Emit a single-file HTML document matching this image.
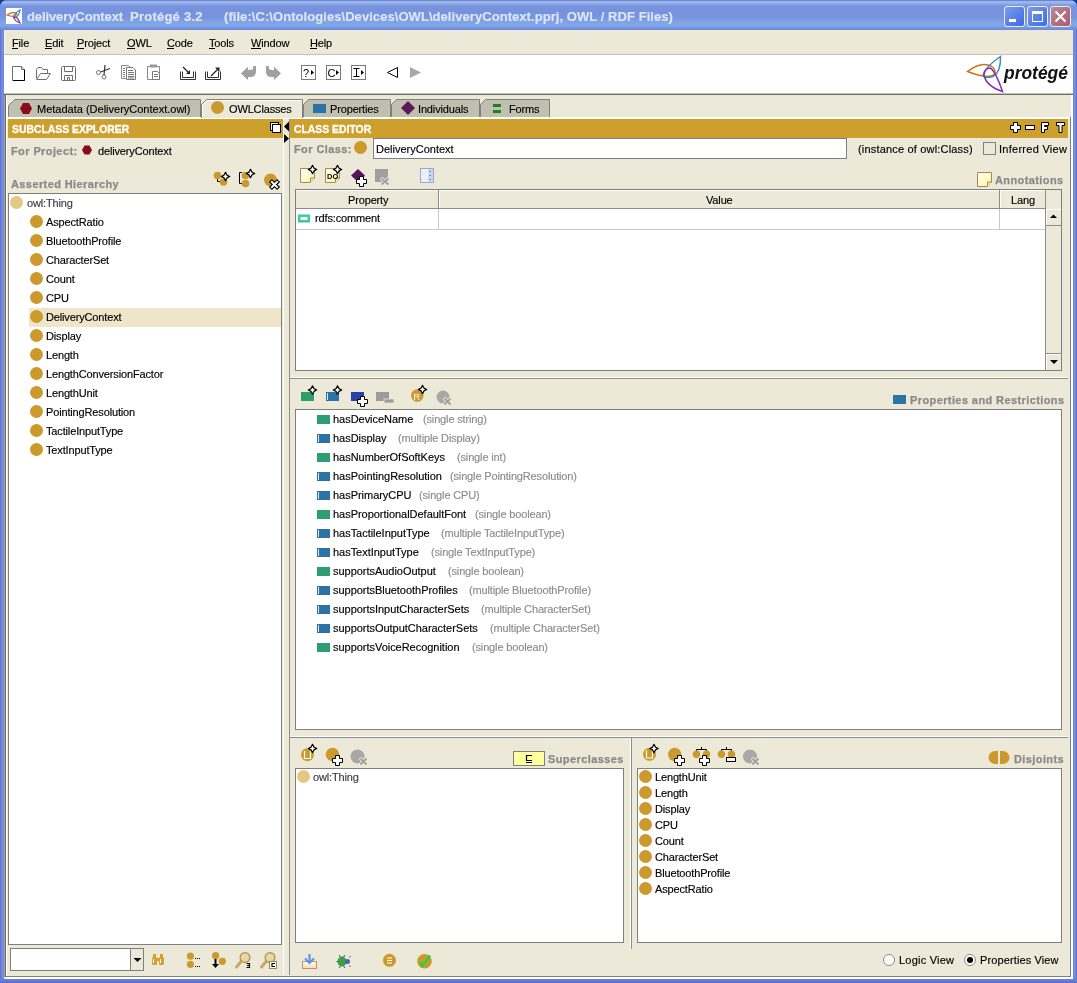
<!DOCTYPE html>
<html><head><meta charset="utf-8">
<style>
*{margin:0;padding:0;box-sizing:border-box}
html,body{width:1077px;height:983px;overflow:hidden;background:#0A3C9C}
body{position:relative;will-change:transform;font-family:"Liberation Sans",sans-serif;font-size:11px;color:#000}
.a{position:absolute}
.t{position:absolute;white-space:nowrap;font-size:11px;line-height:13px;letter-spacing:-0.15px;-webkit-text-stroke:0.15px currentColor}
.b{font-weight:bold}
.gl{position:absolute;white-space:nowrap;line-height:13px;color:#8A8A8A;font-weight:bold;font-size:11px;letter-spacing:0.4px;-webkit-text-stroke:0.25px #8A8A8A}
.box{position:absolute;background:#fff;border:1px solid #7F7F7F}
.gold{position:absolute;background:#CD9F2D}
.ci{position:absolute;width:13px;height:13px;border-radius:50%;background:#CC9A2C}
.pg{position:absolute;width:13px;height:9px;background:#2E9E72}
.pb{position:absolute;width:13px;height:9px;background:#2B72A6}
.pb:after{content:"";position:absolute;left:1px;top:1px;width:1px;height:7px;background:#DDE8F0}
</style></head><body>
<div class="a" style="left:0px;top:0px;width:1077px;height:983px;background:#6E86DC;border-radius:7px 7px 0 0"></div>
<div class="a" style="left:0px;top:0px;width:1077px;height:30px;background:linear-gradient(#6387DD 0px,#6387DD 1px,#9DB4E8 1px,#9DB4E8 3px,#7D9BE0 5px,#7893DD 7px,#7893DD 17px,#7FA5E6 22px,#7FA5E6 26px,#7089DD 29px,#7089DD 30px);border-radius:7px 7px 0 0"></div>
<div class="a" style="left:0px;top:30px;width:4px;height:953px;background:linear-gradient(90deg,#5A6CD0,#7A8EE0 50%,#6A86E0);"></div>
<div class="a" style="left:1073px;top:30px;width:4px;height:953px;background:linear-gradient(90deg,#6A86E0,#7A8EE0 50%,#5A6CD0);"></div>
<div class="a" style="left:0px;top:979px;width:1077px;height:4px;background:linear-gradient(#6A86E0,#5A6CD0);"></div>
<div class="a" style="left:6px;top:8px;width:16px;height:16px;background:#fff;"></div>
<div class="t b" style="left:27px;top:9px;font-size:13px;line-height:15px;color:#DCE6F8;letter-spacing:0;letter-spacing:-0.1px">deliveryContext</div>
<div class="t b" style="left:130px;top:9px;font-size:13px;line-height:15px;color:#DCE6F8;letter-spacing:0;letter-spacing:0.24px">Protégé 3.2</div>
<div class="t b" style="left:224px;top:9px;font-size:13px;line-height:15px;color:#DCE6F8;letter-spacing:0;letter-spacing:0.06px">(file:\C:\Ontologies\Devices\OWL\deliveryContext.pprj, OWL / RDF Files)</div>
<div class="a" style="left:1004px;top:6px;width:21px;height:21px;background:linear-gradient(135deg,#7B9BEA,#3E6AE6);border:1px solid #E8EEF8;border-radius:3px"></div>
<div class="a" style="left:1027px;top:6px;width:21px;height:21px;background:linear-gradient(135deg,#7B9BEA,#3E6AE6);border:1px solid #E8EEF8;border-radius:3px"></div>
<div class="a" style="left:1050px;top:6px;width:21px;height:21px;background:linear-gradient(135deg,#B7899B,#B05A68);border:1px solid #E8EEF8;border-radius:3px"></div>
<div class="a" style="left:4px;top:30px;width:1069px;height:25px;background:#ECE9D8;"></div>
<div class="t" style="left:12px;top:37px;">File</div>
<div class="t" style="left:45px;top:37px;">Edit</div>
<div class="t" style="left:77px;top:37px;">Project</div>
<div class="t" style="left:127px;top:37px;">OWL</div>
<div class="t" style="left:167px;top:37px;">Code</div>
<div class="t" style="left:209px;top:37px;">Tools</div>
<div class="t" style="left:251px;top:37px;">Window</div>
<div class="t" style="left:310px;top:37px;">Help</div>
<div class="a" style="left:12px;top:48px;width:6px;height:1px;background:#000;"></div>
<div class="a" style="left:45px;top:48px;width:7px;height:1px;background:#000;"></div>
<div class="a" style="left:77px;top:48px;width:7px;height:1px;background:#000;"></div>
<div class="a" style="left:127px;top:48px;width:8px;height:1px;background:#000;"></div>
<div class="a" style="left:167px;top:48px;width:7px;height:1px;background:#000;"></div>
<div class="a" style="left:209px;top:48px;width:6px;height:1px;background:#000;"></div>
<div class="a" style="left:251px;top:48px;width:10px;height:1px;background:#000;"></div>
<div class="a" style="left:310px;top:48px;width:7px;height:1px;background:#000;"></div>
<div class="a" style="left:4px;top:55px;width:1069px;height:38px;background:#fff;"></div>
<div class="a" style="left:4px;top:54px;width:1069px;height:1px;background:#C5C3B0;"></div>
<div class="a" style="left:4px;top:30px;width:1px;height:24px;background:#F8F4E2;"></div>
<div class="a" style="left:4px;top:93px;width:1069px;height:1px;background:#C5C2B2;"></div>
<div class="a" style="left:4px;top:94px;width:1069px;height:1px;background:#716F64;"></div>
<div class="a" style="left:4px;top:95px;width:1069px;height:884px;background:#ECE9D8;"></div>
<div class="a" style="left:4px;top:95px;width:1px;height:882px;background:#A5A294;"></div>
<div class="a" style="left:5px;top:95px;width:1px;height:882px;background:#716F64;"></div>
<div class="a" style="left:6px;top:95px;width:1px;height:882px;background:#FFFFFF;"></div>
<div class="a" style="left:6px;top:977px;width:1067px;height:2px;background:#fff;"></div>
<div class="a" style="left:1071px;top:95px;width:2px;height:884px;background:#fff;"></div>
<div class="a" style="left:6px;top:976px;width:1065px;height:1px;background:#7F7F7F;"></div>
<div class="a" style="left:1070px;top:117px;width:1px;height:860px;background:#7F7F7F;"></div>
<div class="a" style="left:6px;top:117px;width:1064px;height:2px;background:#fff;"></div>
<svg class="a" style="left:0;top:95px" width="560" height="24">
 <path d="M8.5,22 V10.5 L14.5,4.5 H200.5 V22" fill="#C0C0B1" stroke="#7F7F7F"/>
 <path d="M7.5,22 V10 L14,3.5" fill="none" stroke="#fff"/>
 <path d="M201.5,23 V9.5 L206.5,4.5 H302.5 V23" fill="#ECE9D8" stroke="#7F7F7F"/>
 <path d="M202.5,23 V10 L207,5.5 H301.5" fill="none" stroke="#fff"/>
 <path d="M303.5,22 V9.5 L308.5,4.5 H390.5 V22" fill="#C0C0B1" stroke="#7F7F7F"/>
 <path d="M391.5,22 V9.5 L396.5,4.5 H479.5 V22" fill="#C0C0B1" stroke="#7F7F7F"/>
 <path d="M480.5,22 V9.5 L485.5,4.5 H549.5 V22" fill="#C0C0B1" stroke="#7F7F7F"/>
</svg>
<svg class="a" style="left:20px;top:103px" width="14" height="13"><path d="M3,0 H9 L12,5.5 L9,11 H3 L0,5.5Z" fill="#8B0A1E"/></svg>
<div class="t" style="left:37px;top:103px;letter-spacing:0px">Metadata (DeliveryContext.owl)</div>
<div class="ci" style="left:211px;top:101px"></div>
<div class="t" style="left:229px;top:103px;">OWLClasses</div>
<div class="a" style="left:313px;top:104px;width:13px;height:9px;background:#2C72A8;"></div>
<div class="t" style="left:330px;top:103px;">Properties</div>
<svg class="a" style="left:401px;top:101px" width="14" height="14"><path d="M7,0 L14,7 L7,14 L0,7Z" fill="#5A1A5A"/></svg>
<div class="t" style="left:418px;top:103px;">Individuals</div>
<div class="a" style="left:493px;top:104px;width:8px;height:3px;background:#208020;"></div>
<div class="a" style="left:493px;top:110px;width:8px;height:3px;background:#208020;"></div>
<div class="t" style="left:509px;top:103px;">Forms</div>
<div class="gold" style="left:8px;top:119px;width:275px;height:19px"></div>
<div class="t b" style="left:12px;top:123px;color:#fff;font-size:10.4px;letter-spacing:0px;-webkit-text-stroke:0.3px #fff">SUBCLASS EXPLORER</div>
<div class="gold" style="left:290px;top:119px;width:778px;height:19px"></div>
<div class="t b" style="left:294px;top:123px;color:#fff;font-size:10.4px;letter-spacing:0px;-webkit-text-stroke:0.3px #fff">CLASS EDITOR</div>
<div class="a" style="left:283px;top:119px;width:1px;height:856px;background:#fff;"></div>
<div class="a" style="left:289px;top:119px;width:1px;height:856px;background:#8F8F8F;"></div>
<div class="gl" style="left:11px;top:145px;">For Project:</div>
<div class="t" style="left:98px;top:145px;">deliveryContext</div>
<div class="gl" style="left:11px;top:178px;">Asserted Hierarchy</div>
<div class="box" style="left:8px;top:193px;width:274px;height:752px"></div>
<div class="a" style="left:10px;top:196px;width:13px;height:13px;border-radius:50%;background:#E4C882"></div>
<div class="t" style="left:27px;top:197px;color:#3C3C3C">owl:Thing</div>
<div class="ci" style="left:30px;top:215px"></div>
<div class="t" style="left:46px;top:216px;">AspectRatio</div>
<div class="ci" style="left:30px;top:234px"></div>
<div class="t" style="left:46px;top:235px;">BluetoothProfile</div>
<div class="ci" style="left:30px;top:253px"></div>
<div class="t" style="left:46px;top:254px;">CharacterSet</div>
<div class="ci" style="left:30px;top:272px"></div>
<div class="t" style="left:46px;top:273px;">Count</div>
<div class="ci" style="left:30px;top:291px"></div>
<div class="t" style="left:46px;top:292px;">CPU</div>
<div class="a" style="left:29px;top:308px;width:252px;height:19px;background:#EFE5C8;"></div>
<div class="ci" style="left:30px;top:310px"></div>
<div class="t" style="left:46px;top:311px;">DeliveryContext</div>
<div class="ci" style="left:30px;top:329px"></div>
<div class="t" style="left:46px;top:330px;">Display</div>
<div class="ci" style="left:30px;top:348px"></div>
<div class="t" style="left:46px;top:349px;">Length</div>
<div class="ci" style="left:30px;top:367px"></div>
<div class="t" style="left:46px;top:368px;">LengthConversionFactor</div>
<div class="ci" style="left:30px;top:386px"></div>
<div class="t" style="left:46px;top:387px;">LengthUnit</div>
<div class="ci" style="left:30px;top:405px"></div>
<div class="t" style="left:46px;top:406px;">PointingResolution</div>
<div class="ci" style="left:30px;top:424px"></div>
<div class="t" style="left:46px;top:425px;">TactileInputType</div>
<div class="ci" style="left:30px;top:443px"></div>
<div class="t" style="left:46px;top:444px;">TextInputType</div>
<div class="box" style="left:10px;top:948px;width:134px;height:23px"></div>
<div class="a" style="left:130px;top:949px;width:13px;height:21px;background:#ECE9D8;border-left:1px solid #7F7F7F"></div>
<div class="gl" style="left:294px;top:143px;">For Class:</div>
<div class="ci" style="left:354px;top:141px"></div>
<div class="box" style="left:373px;top:138px;width:474px;height:21px"></div>
<div class="t" style="left:376px;top:143px;letter-spacing:0px">DeliveryContext</div>
<div class="t" style="left:858px;top:143px;letter-spacing:0.18px">(instance of owl:Class)</div>
<div class="a" style="left:983px;top:142px;width:13px;height:13px;background:#ECE9D8;border:1px solid #808080"></div>
<div class="t" style="left:999px;top:143px;letter-spacing:0.27px">Inferred View</div>
<div class="gl" style="left:995px;top:174px;">Annotations</div>
<div class="box" style="left:295px;top:189px;width:767px;height:182px"></div>
<div class="gl" style="left:910px;top:394px;">Properties and Restrictions</div>
<div class="box" style="left:295px;top:409px;width:767px;height:321px"></div>
<div class="pg" style="left:317px;top:415px"></div><div class="t" style="left:333px;top:413px;letter-spacing:-0.03px">hasDeviceName</div>
<div class="t" style="left:423px;top:413px;color:#8C8C8C">(single string)</div>
<div class="pb" style="left:317px;top:434px"></div><div class="t" style="left:333px;top:432px;letter-spacing:-0.03px">hasDisplay</div>
<div class="t" style="left:398px;top:432px;color:#8C8C8C">(multiple Display)</div>
<div class="pg" style="left:317px;top:453px"></div><div class="t" style="left:333px;top:451px;letter-spacing:-0.03px">hasNumberOfSoftKeys</div>
<div class="t" style="left:457px;top:451px;color:#8C8C8C">(single int)</div>
<div class="pb" style="left:317px;top:472px"></div><div class="t" style="left:333px;top:470px;letter-spacing:-0.03px">hasPointingResolution</div>
<div class="t" style="left:450px;top:470px;color:#8C8C8C">(single PointingResolution)</div>
<div class="pb" style="left:317px;top:491px"></div><div class="t" style="left:333px;top:489px;letter-spacing:-0.03px">hasPrimaryCPU</div>
<div class="t" style="left:419px;top:489px;color:#8C8C8C">(single CPU)</div>
<div class="pg" style="left:317px;top:510px"></div><div class="t" style="left:333px;top:508px;letter-spacing:-0.03px">hasProportionalDefaultFont</div>
<div class="t" style="left:475px;top:508px;color:#8C8C8C">(single boolean)</div>
<div class="pb" style="left:317px;top:529px"></div><div class="t" style="left:333px;top:527px;letter-spacing:-0.03px">hasTactileInputType</div>
<div class="t" style="left:441px;top:527px;color:#8C8C8C">(multiple TactileInputType)</div>
<div class="pb" style="left:317px;top:548px"></div><div class="t" style="left:333px;top:546px;letter-spacing:-0.03px">hasTextInputType</div>
<div class="t" style="left:431px;top:546px;color:#8C8C8C">(single TextInputType)</div>
<div class="pg" style="left:317px;top:567px"></div><div class="t" style="left:333px;top:565px;letter-spacing:-0.03px">supportsAudioOutput</div>
<div class="t" style="left:448px;top:565px;color:#8C8C8C">(single boolean)</div>
<div class="pb" style="left:317px;top:586px"></div><div class="t" style="left:333px;top:584px;letter-spacing:-0.03px">supportsBluetoothProfiles</div>
<div class="t" style="left:469px;top:584px;color:#8C8C8C">(multiple BluetoothProfile)</div>
<div class="pb" style="left:317px;top:605px"></div><div class="t" style="left:333px;top:603px;letter-spacing:-0.03px">supportsInputCharacterSets</div>
<div class="t" style="left:481px;top:603px;color:#8C8C8C">(multiple CharacterSet)</div>
<div class="pb" style="left:317px;top:624px"></div><div class="t" style="left:333px;top:622px;letter-spacing:-0.03px">supportsOutputCharacterSets</div>
<div class="t" style="left:490px;top:622px;color:#8C8C8C">(multiple CharacterSet)</div>
<div class="pg" style="left:317px;top:643px"></div><div class="t" style="left:333px;top:641px;letter-spacing:-0.03px">supportsVoiceRecognition</div>
<div class="t" style="left:472px;top:641px;color:#8C8C8C">(single boolean)</div>
<div class="a" style="left:290px;top:377px;width:778px;height:1px;background:#fff;"></div>
<div class="a" style="left:290px;top:378px;width:778px;height:1px;background:#8C8C8C;"></div>
<div class="a" style="left:290px;top:736px;width:778px;height:1px;background:#fff;"></div>
<div class="a" style="left:290px;top:737px;width:778px;height:1px;background:#8C8C8C;"></div>
<div class="a" style="left:630px;top:738px;width:1px;height:211px;background:#fff;"></div>
<div class="a" style="left:631px;top:738px;width:1px;height:211px;background:#8C8C8C;"></div>
<div class="gl" style="left:548px;top:753px;">Superclasses</div>
<div class="box" style="left:295px;top:768px;width:329px;height:175px"></div>
<div class="a" style="left:297px;top:770px;width:13px;height:13px;border-radius:50%;background:#E4C882"></div><div class="t" style="left:313px;top:771px;color:#3C3C3C">owl:Thing</div>
<div class="gl" style="left:1014px;top:753px;">Disjoints</div>
<div class="box" style="left:637px;top:768px;width:425px;height:175px"></div>
<div class="ci" style="left:639px;top:770px"></div><div class="t" style="left:655px;top:771px;">LengthUnit</div>
<div class="ci" style="left:639px;top:786px"></div><div class="t" style="left:655px;top:787px;">Length</div>
<div class="ci" style="left:639px;top:802px"></div><div class="t" style="left:655px;top:803px;">Display</div>
<div class="ci" style="left:639px;top:818px"></div><div class="t" style="left:655px;top:819px;">CPU</div>
<div class="ci" style="left:639px;top:834px"></div><div class="t" style="left:655px;top:835px;">Count</div>
<div class="ci" style="left:639px;top:850px"></div><div class="t" style="left:655px;top:851px;">CharacterSet</div>
<div class="ci" style="left:639px;top:866px"></div><div class="t" style="left:655px;top:867px;">BluetoothProfile</div>
<div class="ci" style="left:639px;top:882px"></div><div class="t" style="left:655px;top:883px;">AspectRatio</div>
<div class="t" style="left:899px;top:954px;letter-spacing:0.23px">Logic View</div>
<div class="t" style="left:980px;top:954px;letter-spacing:0.12px">Properties View</div>
<svg class="a" style="left:0;top:0" width="1077" height="983"><g fill="none" stroke-width="1.2"><path d="M7,15 Q13,11 17,14 Q15,18 7,15Z" stroke="#C87020"/><path d="M20,10 Q19,17 14,18 Q13,14 20,10Z" stroke="#3088B8"/><path d="M20,23 Q14,21 14,17 Q17,16 20,23Z" stroke="#8030A0"/></g><rect x="1009" y="19" width="7" height="3" fill="#fff"/><rect x="1032.5" y="11.5" width="10" height="10" fill="none" stroke="#fff" stroke-width="1"/><rect x="1032" y="11" width="11" height="3" fill="#fff"/><path d="M1055.5,11.5 L1065.5,21.5 M1065.5,11.5 L1055.5,21.5" stroke="#fff" stroke-width="2"/><path d="M12.5,66.5 H21.5 L24.5,69.5 V80.5 H12.5Z" fill="#fff" stroke="#6E6E6E"/><path d="M24.5,69.5 V80.5 H13" fill="none" stroke="#000"/><path d="M21.5,66.5 V69.5 H24.5" fill="#eee" stroke="#6E6E6E"/><path d="M36.5,78.5 V69.5 L38,67.5 H41.5 L43,69.5 H47.5 V73" fill="#fff" stroke="#6E6E6E"/><path d="M36.5,79.5 L40.5,73.5 H50.5 L46.5,79.5Z" fill="#fff" stroke="#6E6E6E"/><rect x="61.5" y="66.5" width="14" height="14" rx="1" fill="#fff" stroke="#6E6E6E"/><path d="M64.5,66.5 V71.5 H72.5 V66.5" fill="none" stroke="#6E6E6E"/><path d="M64.5,80.5 V75.5 H72.5 V80.5 M67.5,80.5 V77.5 H69.5 V80.5" fill="none" stroke="#6E6E6E"/><circle cx="98.5" cy="72.5" r="2" fill="none" stroke="#6E6E6E"/><circle cx="104" cy="77" r="2" fill="none" stroke="#6E6E6E"/><path d="M100.5,72 L110,68.5 M104,75 L105,65" stroke="#333" stroke-width="1.2"/><path d="M121.5,65.5 H128.5 L130,67 V78.5 H121.5Z" fill="#fff" stroke="#888"/><path d="M126.5,67.5 H133 L135.5,70 V79.5 H126.5Z" fill="#fff" stroke="#777"/><path d="M123,68.5 H125 M123,70.5 H125 M123,72.5 H125 M123,74.5 H125 M123,76.5 H125 M128,70.5 H133 M128,72.5 H134 M128,74.5 H134 M128,76.5 H134 M128,78 H134" stroke="#777"/><path d="M147.5,66.5 H159.5 V79.5 H147.5Z" fill="#fff" stroke="#888"/><rect x="150" y="64.5" width="7" height="3" fill="#999"/><path d="M152.5,71.5 H157.5 L159.5,73.5 V79.5 H152.5Z" fill="#fff" stroke="#777"/><path d="M154,74.5 H158 M154,76.5 H158" stroke="#777"/><path d="M180.5,71.5 V79.5 H195.5 V71.5 M182.5,71.5 V77.5 H193.5 V71.5" fill="none" stroke="#333"/><path d="M183,67 L189,73" stroke="#222" stroke-width="1.2"/><path d="M186,74 H190 V70Z" fill="#222"/><path d="M205.5,71.5 V79.5 H220.5 V71.5 M207.5,71.5 V77.5 H218.5 V71.5" fill="none" stroke="#333"/><path d="M211,76 L218,69" stroke="#222" stroke-width="1.2"/><path d="M215,67.5 H219.5 V72Z" fill="#222"/><path d="M241,73.5 L248,66.8 L248,70 L250,70 Q253.2,70 253.2,67.5 L253.2,66 L256,66 L256,72 Q256,77 250,77 L248,77 L248,80Z" fill="#A0A0A0"/><path d="M281,73.5 L274,66.8 L274,70 L272,70 Q268.8,70 268.8,67.5 L268.8,66 L266,66 L266,72 Q266,77 272,77 L274,77 L274,80Z" fill="#A0A0A0"/><rect x="301.5" y="65.5" width="14" height="14" fill="#fff" stroke="#7A7A7A"/><path d="M311,70 L314,72.5 L311,75Z" fill="#000"/><rect x="326.5" y="65.5" width="14" height="14" fill="#fff" stroke="#7A7A7A"/><path d="M336,70 L339,72.5 L336,75Z" fill="#000"/><rect x="351.5" y="65.5" width="14" height="14" fill="#fff" stroke="#7A7A7A"/><path d="M361,70 L364,72.5 L361,75Z" fill="#000"/><text x="303" y="77" font-family="Liberation Sans" font-size="11" fill="#000">?</text><text x="327.5" y="77" font-family="Liberation Sans" font-size="11" fill="#000">C</text><path d="M353.5,68.5 H359.5 M356.5,68.5 V76.5 M353.5,76.5 H359.5" stroke="#000"/><path d="M397.5,67.5 V77.5 L387.5,72.5Z" fill="#fff" stroke="#000" stroke-linejoin="miter"/><path d="M410,67 V78 L421,72.5Z" fill="#A8A8A8"/><g fill="none" stroke-width="1.5"><path d="M967.5,71.5 Q981,61 991,66 Q997,70 994,75 Q987,79 967.5,71.5Z" stroke="#C8741E"/><path d="M1000.5,56.5 Q1001,72 993,76.5 Q984,79 983,75 Q985,67 1000.5,56.5Z" stroke="#3A8EC0"/><path d="M1002.5,91.5 Q986,86 984,75 Q985,68 990,68 Q995,70 1002.5,91.5Z" stroke="#8A30A8"/></g><text x="1004" y="78.5" font-family="Liberation Sans" font-weight="bold" font-style="italic" font-size="19" fill="#111" textLength="64" lengthAdjust="spacingAndGlyphs">protégé</text><rect x="270.5" y="122.5" width="8" height="8" fill="#fff" stroke="#000"/><rect x="272.5" y="124.5" width="8" height="8" fill="#fff" stroke="#000"/><path d="M284,126.5 L289,121.5 V131.5Z" fill="#000"/><path d="M284,134 V143 L289,138.5Z" fill="#000"/><path d="M1013.5,122.5 L1017.5,122.5 L1017.5,125.5 L1020.5,125.5 L1020.5,129.5 L1017.5,129.5 L1017.5,132.5 L1013.5,132.5 L1013.5,129.5 L1010.5,129.5 L1010.5,125.5 L1013.5,125.5Z" fill="#fff" stroke="#000"/><rect x="1025.5" y="125.5" width="9" height="4" fill="#fff" stroke="#000"/><path d="M1041.5,122.5 H1048.5 V125.5 H1044.5 V126.5 H1047.5 V129.5 H1044.5 V132.5 H1041.5Z" fill="#fff" stroke="#000"/><path d="M1056.5,122.5 H1064.5 V125.5 H1062 V132.5 H1059 V125.5 H1056.5Z" fill="#fff" stroke="#000"/><path d="M84.5,145.5 H89.5 L92,150 L89.5,154.5 H84.5 L82,150Z" fill="#8B0A1E"/><circle cx="217.5" cy="175.5" r="3.8" fill="#CC9A2C"/><path d="M217.5,179 V181.5 H220" fill="none" stroke="#000"/><circle cx="223.5" cy="182" r="3.8" fill="#CC9A2C"/><path d="M225.5,172.3 L226.9,175.1 L229.7,176.5 L226.9,177.9 L225.5,180.7 L224.1,177.9 L221.3,176.5 L224.1,175.1Z" fill="#fff" stroke="#000" stroke-width="1.2" stroke-linejoin="round"/><path d="M242,172.5 H239.5 V183.5 H242" fill="none" stroke="#000"/><circle cx="245.5" cy="175.5" r="3.8" fill="#CC9A2C"/><circle cx="245.5" cy="183.5" r="3.8" fill="#CC9A2C"/><path d="M250.5,169.3 L251.9,172.1 L254.7,173.5 L251.9,174.9 L250.5,177.7 L249.1,174.9 L246.3,173.5 L249.1,172.1Z" fill="#fff" stroke="#000" stroke-width="1.2" stroke-linejoin="round"/><circle cx="270.5" cy="180" r="6.5" fill="#CC9A2C"/><path d="M271.9,181.9 L277.1,187.1 M277.1,181.9 L271.9,187.1" stroke="#000" stroke-width="4.2" stroke-linecap="square"/><path d="M271.9,181.9 L277.1,187.1 M277.1,181.9 L271.9,187.1" stroke="#fff" stroke-width="2" stroke-linecap="square"/><defs><linearGradient id="ny" x1="0" y1="0" x2="1" y2="1"><stop offset="0" stop-color="#fff"/><stop offset="1" stop-color="#FFF59A"/></linearGradient></defs><defs></defs><path d="M300.5,168.5 H314.5 V178 L310,182.5 H300.5Z" fill="url(#ny)" stroke="#A88850"/><path d="M314.5,178 H310.5 V182.5" fill="#F6E9A8" stroke="#A88850"/><path d="M312.5,165.3 L313.9,168.1 L316.7,169.5 L313.9,170.9 L312.5,173.7 L311.1,170.9 L308.3,169.5 L311.1,168.1Z" fill="#fff" stroke="#000" stroke-width="1.2" stroke-linejoin="round"/><defs></defs><path d="M325.5,168.5 H339.5 V178 L335,182.5 H325.5Z" fill="url(#ny)" stroke="#A88850"/><path d="M339.5,178 H335.5 V182.5" fill="#F6E9A8" stroke="#A88850"/><text x="327" y="179" font-family="Liberation Sans" font-weight="bold" font-size="7.5" fill="#000">DO</text><path d="M337.5,165.3 L338.9,168.1 L341.7,169.5 L338.9,170.9 L337.5,173.7 L336.1,170.9 L333.3,169.5 L336.1,168.1Z" fill="#fff" stroke="#000" stroke-width="1.2" stroke-linejoin="round"/><path d="M358,169 L365,175.5 L358,182 L351,175.5Z" fill="#52165A"/><path d="M359.5,176.5 L363.5,176.5 L363.5,179.5 L366.5,179.5 L366.5,183.5 L363.5,183.5 L363.5,186.5 L359.5,186.5 L359.5,183.5 L356.5,183.5 L356.5,179.5 L359.5,179.5Z" fill="#fff" stroke="#000"/><rect x="375" y="169" width="13" height="13" fill="#A0A0A0"/><path d="M381,178 L389,185 M389,178 L381,185" stroke="#ECE9D8" stroke-width="3.5"/><path d="M381.5,178.5 L388.5,184.5 M388.5,178.5 L381.5,184.5" stroke="#A0A0A0" stroke-width="1.8"/><rect x="420.5" y="168.5" width="13" height="14" fill="#EAF0FA" stroke="#9AAAC8"/><rect x="428.5" y="169" width="4.5" height="13" fill="#C8D4E8"/><path d="M430,171 V172 M430,175 V176 M430,179 V180" stroke="#5070B0" stroke-width="1.5"/><defs></defs><path d="M977.5,172.5 H991.5 V182 L987,186.5 H977.5Z" fill="url(#ny)" stroke="#A88850"/><path d="M991.5,182 H987.5 V186.5" fill="#F6E9A8" stroke="#A88850"/><rect x="296" y="190" width="750" height="18" fill="#ECE9D8"/><path d="M296,190.5 H1046" stroke="#fff"/><path d="M296,208.5 H1046" stroke="#8C8C8C"/><path d="M438.5,190 V208 M999.5,190 V208 M1045.5,190 V208" stroke="#8C8C8C"/><path d="M439.5,191 V208 M1000.5,191 V208" stroke="#fff"/><path d="M296,229.5 H1046 M438.5,209 V229 M999.5,209 V229" stroke="#C8C8C8"/><rect x="1046" y="190" width="15" height="180" fill="#ECE9D8"/><path d="M1045.5,209 V370" stroke="#8C8C8C"/><rect x="1046" y="209" width="15" height="16" fill="#ECE9D8"/><path d="M1046.5,225 V209.5 H1061" stroke="#fff" fill="none"/><path d="M1046,225.5 H1061" stroke="#8C8C8C"/><path d="M1050,218 H1057 L1053.5,214.5Z" fill="#000"/><path d="M1046.5,370 V354.5 H1061" stroke="#fff" fill="none"/><path d="M1046,353.5 H1061" stroke="#8C8C8C"/><path d="M1050,360 H1058 L1054,364Z" fill="#000"/><rect x="298" y="214.5" width="12" height="8" fill="#3CC8A0"/><rect x="300.5" y="217" width="7" height="3" fill="#fff"/><rect x="301" y="392" width="13" height="9" fill="#2E9E72"/><path d="M312.5,385.8 L313.9,388.6 L316.7,390.0 L313.9,391.4 L312.5,394.2 L311.1,391.4 L308.3,390.0 L311.1,388.6Z" fill="#fff" stroke="#000" stroke-width="1.2" stroke-linejoin="round"/><rect x="326" y="392" width="13" height="9" fill="#2B72A6"/><path d="M327.5,393 V400" stroke="#DDE8F0"/><path d="M337.5,385.8 L338.9,388.6 L341.7,390.0 L338.9,391.4 L337.5,394.2 L336.1,391.4 L333.3,390.0 L336.1,388.6Z" fill="#fff" stroke="#000" stroke-width="1.2" stroke-linejoin="round"/><rect x="351" y="392" width="13" height="9" fill="#2840A8"/><path d="M360.5,396.5 L364.5,396.5 L364.5,399.5 L367.5,399.5 L367.5,403.5 L364.5,403.5 L364.5,406.5 L360.5,406.5 L360.5,403.5 L357.5,403.5 L357.5,399.5 L360.5,399.5Z" fill="#fff" stroke="#000"/><rect x="376" y="392" width="13" height="9" fill="#9C9C9C"/><rect x="384" y="399" width="10" height="4" fill="#9C9C9C" stroke="#ECE9D8" stroke-width="0.8"/><circle cx="417.3" cy="395.5" r="6.3" fill="#CC9A2C"/><text x="413.5" y="399.5" font-family="Liberation Sans" font-size="9" fill="#fff">R</text><path d="M422.5,385.3 L423.9,388.1 L426.7,389.5 L423.9,390.9 L422.5,393.7 L421.1,390.9 L418.3,389.5 L421.1,388.1Z" fill="#fff" stroke="#000" stroke-width="1.2" stroke-linejoin="round"/><circle cx="443" cy="397" r="6.5" fill="#A8A8A8"/><path d="M444,398 L451,405 M451,398 L444,405" stroke="#ECE9D8" stroke-width="3.5"/><path d="M444.5,398.5 L450.5,404.5 M450.5,398.5 L444.5,404.5" stroke="#A0A0A0" stroke-width="1.8"/><rect x="893" y="395" width="13" height="9" fill="#2C73A6"/><circle cx="307.5" cy="754.7" r="6.5" fill="#CC9A2C"/><path d="M304.5,751 V758.5 H310.5 V751" fill="none" stroke="#fff" stroke-width="1.2"/><path d="M312.5,744.3 L313.9,747.1 L316.7,748.5 L313.9,749.9 L312.5,752.7 L311.1,749.9 L308.3,748.5 L311.1,747.1Z" fill="#fff" stroke="#000" stroke-width="1.2" stroke-linejoin="round"/><circle cx="332.5" cy="754.5" r="6.7" fill="#CC9A2C"/><path d="M335.5,755.5 L339.5,755.5 L339.5,758.5 L342.5,758.5 L342.5,762.5 L339.5,762.5 L339.5,765.5 L335.5,765.5 L335.5,762.5 L332.5,762.5 L332.5,758.5 L335.5,758.5Z" fill="#fff" stroke="#000"/><circle cx="357.5" cy="756.5" r="7" fill="#A8A8A8"/><path d="M360,758 L367,765 M367,758 L360,765" stroke="#ECE9D8" stroke-width="3.5"/><path d="M360.5,758.5 L366.5,764.5 M366.5,758.5 L360.5,764.5" stroke="#A0A0A0" stroke-width="1.8"/><rect x="513.5" y="751.5" width="31" height="14" fill="#FFFFA0" stroke="#7F7F7F"/><path d="M532,755.5 H526.5 V760.5 H532 M526,762.5 H532" fill="none" stroke="#000" stroke-width="1.2"/><circle cx="649.5" cy="754.3" r="6.5" fill="#CC9A2C"/><path d="M646.5,750.5 V758 H652.5 V750.5" fill="none" stroke="#fff" stroke-width="1.2"/><path d="M654.0,744.3 L655.4,747.1 L658.2,748.5 L655.4,749.9 L654.0,752.7 L652.6,749.9 L649.8,748.5 L652.6,747.1Z" fill="#fff" stroke="#000" stroke-width="1.2" stroke-linejoin="round"/><circle cx="674.7" cy="754.4" r="6.7" fill="#CC9A2C"/><path d="M677.5,755.5 L681.5,755.5 L681.5,758.5 L684.5,758.5 L684.5,762.5 L681.5,762.5 L681.5,765.5 L677.5,765.5 L677.5,762.5 L674.5,762.5 L674.5,758.5 L677.5,758.5Z" fill="#fff" stroke="#000"/><path d="M696.5,752 V749.5 H706.5 V752 M701.5,749.5 V747" fill="none" stroke="#000"/><circle cx="696.5" cy="754.3" r="3.7" fill="#CC9A2C"/><circle cx="706.5" cy="754.3" r="3.7" fill="#CC9A2C"/><path d="M702.5,755.5 L706.5,755.5 L706.5,758.5 L709.5,758.5 L709.5,762.5 L706.5,762.5 L706.5,765.5 L702.5,765.5 L702.5,762.5 L699.5,762.5 L699.5,758.5 L702.5,758.5Z" fill="#fff" stroke="#000"/><path d="M721.5,752 V749.5 H731.5 V752 M726.5,749.5 V747" fill="none" stroke="#000"/><circle cx="721.5" cy="754.3" r="3.7" fill="#CC9A2C"/><circle cx="731.5" cy="754.3" r="3.7" fill="#CC9A2C"/><rect x="726.5" y="757.5" width="9" height="4" fill="#fff" stroke="#000"/><circle cx="750" cy="756.5" r="7" fill="#A8A8A8"/><path d="M752,758 L759,765 M759,758 L752,765" stroke="#ECE9D8" stroke-width="3.5"/><path d="M752.5,758.5 L758.5,764.5 M758.5,758.5 L752.5,764.5" stroke="#A0A0A0" stroke-width="1.8"/><path d="M998,751 A6.5,6.5 0 0 0 998,764Z" fill="#CC9A2C"/><path d="M1000,751 A6.5,6.5 0 0 1 1000,764Z" fill="#CC9A2C"/><path d="M998,751 H995 A6.5,6.5 0 0 0 995,764 H998Z" fill="#CC9A2C"/><path d="M1000,751 H1003 A6.5,6.5 0 0 1 1003,764 H1000Z" fill="#CC9A2C"/><defs><linearGradient id="tr" x1="0" y1="0" x2="0" y2="1"><stop offset="0" stop-color="#fff"/><stop offset="1" stop-color="#F8D8A0"/></linearGradient></defs><rect x="302.5" y="961.5" width="14" height="7" fill="url(#tr)" stroke="#C09070"/><path d="M309.5,954 V962 M305,958.5 L309.5,963 L314,958.5" fill="none" stroke="#5A9AE8" stroke-width="2.2"/><ellipse cx="342" cy="961.5" rx="4.5" ry="5" fill="#3AA040"/><circle cx="347.5" cy="961.5" r="2.5" fill="#5060B0"/><path d="M339,955 L340.5,957 M345,955 L343.5,957 M336.5,961.5 H338 M339,968 L340.5,966 M345,968 L343.5,966 M349.5,957.5 L350.5,956 M349.5,965.5 L350.5,967" stroke="#405090" stroke-width="1"/><circle cx="389.5" cy="960.3" r="6.5" fill="#CC9A2C"/><path d="M387,958 H392 M387,960.5 H392 M387,963 H392" stroke="#fff" stroke-width="1.2"/><circle cx="424.5" cy="961.3" r="7.3" fill="#CC9A2C"/><path d="M419.5,962 L422.5,966 L430,955.5" fill="none" stroke="#30D040" stroke-width="2.5"/><circle cx="889" cy="960" r="5.5" fill="#fff" stroke="#8C8C8C"/><circle cx="970" cy="960" r="5.5" fill="#fff" stroke="#8C8C8C"/><circle cx="970" cy="960" r="3" fill="#000"/><path d="M133.5,958 H141.5 L137.5,962Z" fill="#000"/><g fill="#D4A030"><rect x="152" y="957" width="5" height="8" rx="1.5"/><rect x="159" y="957" width="5" height="8" rx="1.5"/><rect x="153" y="954" width="3" height="4"/><rect x="160" y="954" width="3" height="4"/><rect x="156" y="958" width="4" height="3"/></g><path d="M153.5,959 V963 M160.5,959 V963" stroke="#fff" stroke-width="1"/><circle cx="190.4" cy="956.1" r="3.6" fill="#CC9A2C"/><circle cx="190.4" cy="964.3" r="3.6" fill="#CC9A2C"/><path d="M195,958.5 H200.5 M195,966.5 H200.5" stroke="#000" stroke-dasharray="1,1"/><circle cx="215.6" cy="955.7" r="3.6" fill="#CC9A2C"/><circle cx="222.3" cy="961.3" r="3.6" fill="#CC9A2C"/><path d="M215.5,959 V965" stroke="#000" stroke-width="2"/><path d="M212,964 H219 L215.5,968Z" fill="#000"/><path d="M236.5,967 L241.5,961" stroke="#C8A868" stroke-width="3" stroke-linecap="round"/><circle cx="245" cy="957.5" r="4.8" fill="#E8D8A8" stroke="#B89858" stroke-width="1.5"/><path d="M261.5,967 L266.5,961" stroke="#C8A868" stroke-width="3" stroke-linecap="round"/><circle cx="270" cy="957.5" r="4.8" fill="#E8D8A8" stroke="#B89858" stroke-width="1.5"/><path d="M246.5,963.5 H249.5 V967.5 H246.5 M247,965.5 H249.5" fill="none" stroke="#000" stroke-width="1.2"/><rect x="269.5" y="961.5" width="7" height="7" fill="#fff" stroke="#A08850"/><path d="M275,963.5 H272 V966.5 H275" fill="none" stroke="#000" stroke-width="1.2"/></svg>
<div class="t" style="left:348px;top:194px;">Property</div>
<div class="t" style="left:706px;top:194px;">Value</div>
<div class="t" style="left:1011px;top:194px;">Lang</div>
<div class="t" style="left:315px;top:212px;">rdfs:comment</div>
</body></html>
